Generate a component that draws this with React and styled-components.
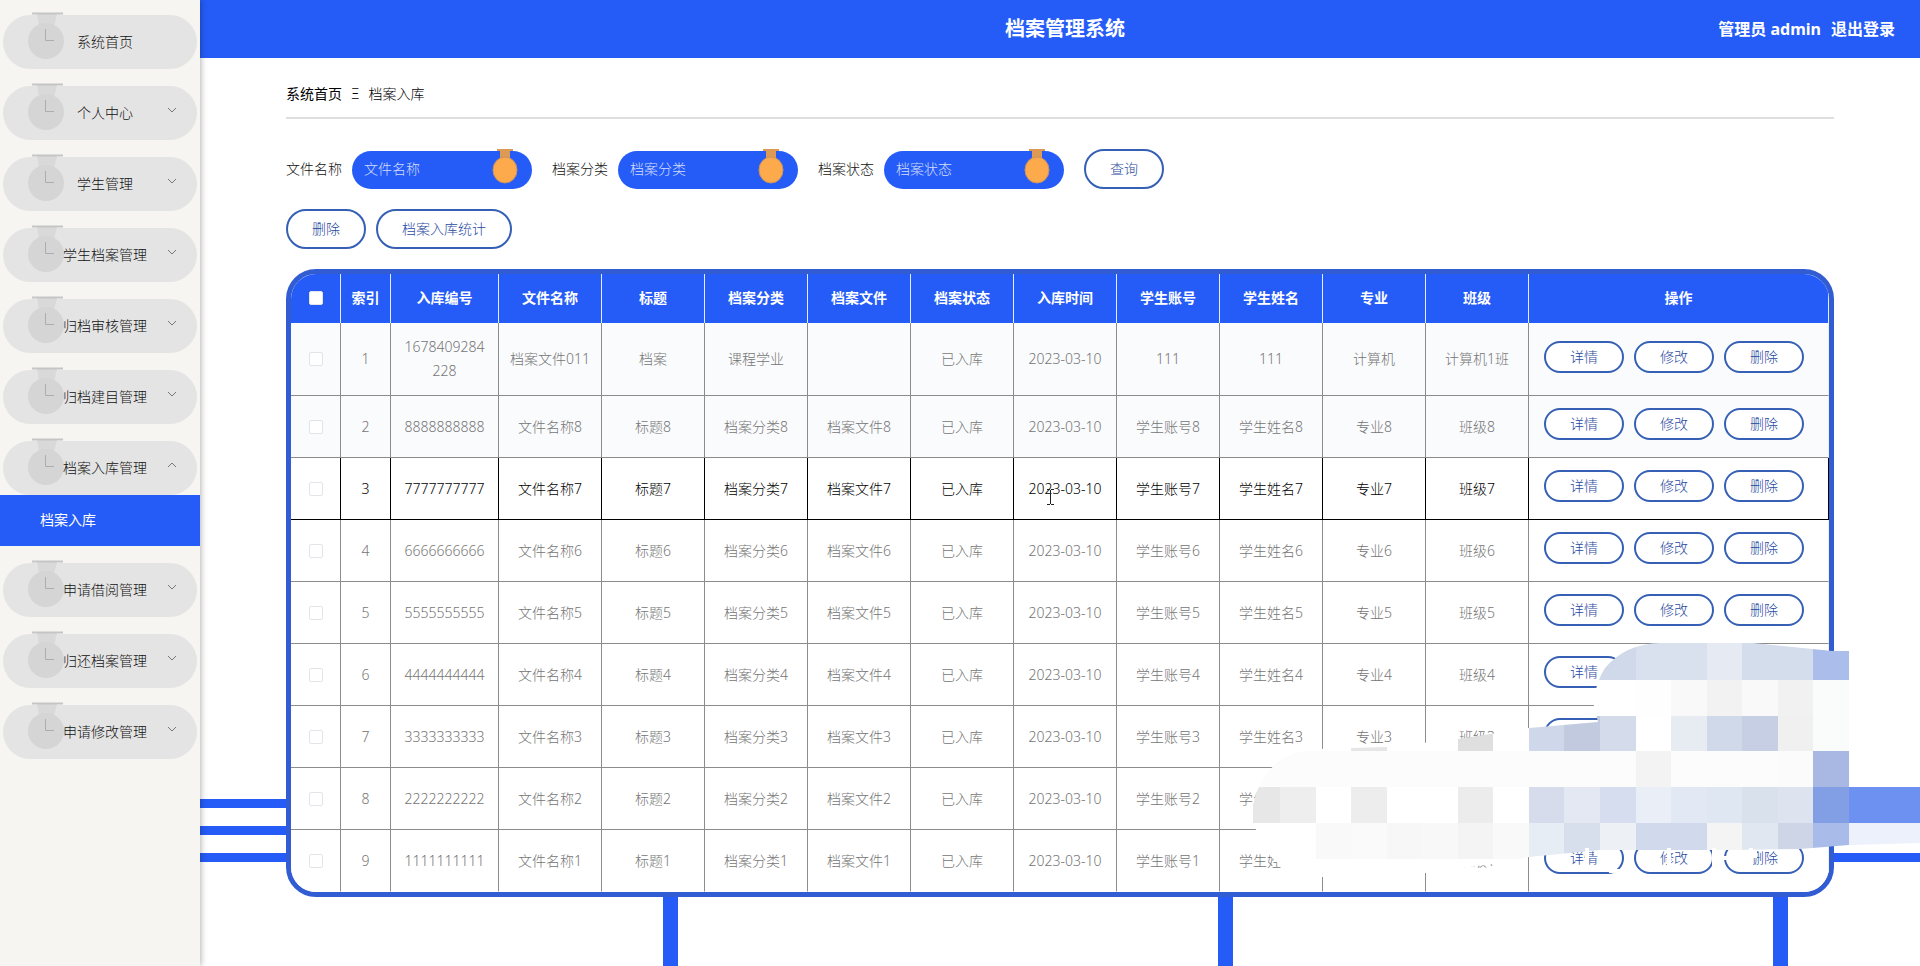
import React from 'react';
import styled, { createGlobalStyle, css } from 'styled-components';

const blue = '#255cf7';
const outline = '#3560b5';

const GlobalStyle = createGlobalStyle`
  * {
    box-sizing: border-box;
  }
  body {
    margin: 0;
    background: #fff;
    color: #111;
    font: 300 14px/24px 'Noto Sans', 'Noto Sans CJK SC', sans-serif;
  }
  button,
  input {
    font: inherit;
  }
  a {
    color: inherit;
    text-decoration: none;
  }
`;

const Page = styled.div`
  position: relative;
  display: flex;
  min-height: 100vh;
  overflow: hidden;
`;

const Sidebar = styled.nav`
  z-index: 1;
  flex: 0 0 200px;
  background: #f6f5f1;
  box-shadow: 1px 0 6px rgba(0, 0, 0, 0.3);
`;

const Menu = styled.ul`
  margin: 0;
  padding: 0;
  list-style: none;
`;

const MenuItem = styled.li`
  padding-top: 15px;
  & + & {
    padding-top: 17px;
  }
`;

const MenuButton = styled.button`
  position: relative;
  display: block;
  width: calc(100% - 6px);
  height: 54px;
  margin: 0 3px;
  padding: 0 0 0 10px;
  border: 0;
  border-radius: 27px;
  background: #e4e4e4;
  color: #111;
  text-align: center;
  cursor: pointer;
`;

const MenuLabel = styled.span`
  position: relative;
`;

const MenuMedal = styled.svg`
  position: absolute;
  left: 25px;
  top: -3px;
`;

const Chevron = styled.svg`
  position: absolute;
  right: 20px;
  top: 20px;
  transform: ${props => (props.$open ? 'rotate(180deg)' : 'none')};
`;

const SubLink = styled.a`
  display: block;
  padding: 0 0 1px 40px;
  background: ${blue};
  color: #fff;
  font-weight: 400;
  line-height: 50px;
`;

const Main = styled.div`
  display: flex;
  flex: 1;
  flex-direction: column;
  min-width: 0;
`;

const Header = styled.header`
  display: grid;
  grid-template-columns: 1fr auto 1fr;
  align-items: center;
  height: 58px;
  padding: 0 25px 0 35px;
  background: ${blue};
  color: #fff;
  font-size: 16px;
  font-weight: 700;
`;

const Title = styled.h1`
  grid-column: 2;
  margin: 0;
  font-size: 20px;
`;

const Account = styled.div`
  display: flex;
  justify-content: flex-end;
  gap: 10px;
`;

const Content = styled.main`
  flex: 1;
  padding: 24px 86px 68px;
  background:
    linear-gradient(${blue}, ${blue}) 0 calc(100% - 158px) / 100% 9px no-repeat,
    linear-gradient(${blue}, ${blue}) 0 calc(100% - 131px) / 100% 9px no-repeat,
    linear-gradient(${blue}, ${blue}) 0 calc(100% - 104px) / 100% 9px no-repeat,
    linear-gradient(90deg, ${blue} 15px, transparent 15px) 463px 100% / 555px 90px repeat-x;
`;

const Breadcrumb = styled.div`
  display: flex;
  gap: 9px;
  padding-bottom: 11px;
  border-bottom: 2px solid #dedede;
  color: #000;
`;

const SearchForm = styled.form`
  display: flex;
  align-items: center;
  gap: 20px;
  padding: 30px 0 20px;
`;

const Field = styled.div`
  display: flex;
  align-items: center;
  gap: 10px;
`;

const InputWrap = styled.div`
  position: relative;
  padding-top: 2px;
`;

const Input = styled.input`
  display: block;
  width: 180px;
  height: 38px;
  padding: 0 50px 3px 12px;
  border: 0;
  border-radius: 19px;
  background: ${blue};
  color: #fff;
  &::placeholder {
    color: #d3defd;
    opacity: 1;
  }
`;

const FieldMedal = styled.svg`
  position: absolute;
  right: 14px;
  top: 0;
`;

const Button = styled.button`
  min-width: 80px;
  height: ${props => (props.$small ? 32 : 40)}px;
  padding: 0 24px;
  border: 2px solid ${outline};
  border-radius: 20px;
  background: #fff;
  color: #1f49a0;
  line-height: 20px;
  cursor: pointer;
`;

const Toolbar = styled.div`
  display: flex;
  gap: 10px;
  padding-bottom: 20px;
`;

const Card = styled.div`
  overflow: hidden;
  border: 5px solid #315cd2;
  border-radius: 30px;
  background: #fff;
`;

const Table = styled.table`
  width: 100%;
  border-collapse: separate;
  border-spacing: 0;
  table-layout: fixed;
`;

const Th = styled.th`
  width: ${props => (props.$width ? `${props.$width}px` : 'auto')};
  height: 49px;
  padding: 0 0 2px;
  border-right: 1px solid #e4ecff;
  background: ${blue};
  color: #fff;
  font-weight: 700;
`;

const Td = styled.td`
  padding: 12px 11px;
  border: solid #8c8c8c;
  border-width: 0 1px 1px 0;
  text-align: center;
  word-break: break-all;
  &:last-child {
    border-right-color: #eee;
  }
`;

const TextTd = styled(Td)`
  padding: 12px 0;
`;

const ActionTd = styled(Td)`
  padding: 12px 15px 17px;
`;

const Actions = styled.div`
  display: flex;
  gap: 10px;
`;

const Tr = styled.tr`
  background: ${props => (props.$shaded ? '#fafbfd' : '#fff')};
  color: #757575;
  &:last-child td {
    border-bottom-color: transparent;
  }
  ${props => props.$active && css`
    color: #000;
    td,
    td:last-child {
      border-color: #000;
    }
  `}
`;

const Checkbox = styled.input`
  display: block;
  width: 14px;
  height: 14px;
  margin: 0 auto;
  border: 1px solid #e2e4e9;
  border-radius: 2px;
  background: #fff;
  appearance: none;
`;

const Mosaic = styled.svg`
  position: absolute;
  right: 0;
  top: 640px;
  pointer-events: none;
`;

const TextCursor = styled.svg`
  position: absolute;
  left: 1046px;
  top: 489px;
  pointer-events: none;
`;

const menus = [
  '系统首页',
  '个人中心',
  '学生管理',
  '学生档案管理',
  '归档审核管理',
  '归档建目管理',
  '档案入库管理',
  '申请借阅管理',
  '归还档案管理',
  '申请修改管理',
];

const fields = ['文件名称', '档案分类', '档案状态'];

const columns = [
  '入库编号',
  '文件名称',
  '标题',
  '档案分类',
  '档案文件',
  '档案状态',
  '入库时间',
  '学生账号',
  '学生姓名',
  '专业',
  '班级',
];

const rows = [
  ['1678409284228', '档案文件011', '档案', '课程学业', '', '已入库', '2023-03-10', '111', '111', '计算机', '计算机1班'],
  ...[8, 7, 6, 5, 4, 3, 2, 1].map(n => [
    String(n).repeat(10),
    `文件名称${n}`,
    `标题${n}`,
    `档案分类${n}`,
    `档案文件${n}`,
    '已入库',
    '2023-03-10',
    `学生账号${n}`,
    `学生姓名${n}`,
    `专业${n}`,
    `班级${n}`,
  ]),
];

// column edges and row edges of the mosaic, then one colour per block
const mosaicX = [0, 27, 63, 98, 134, 169, 205, 240, 276, 311, 347, 383, 418, 454, 489, 525, 560, 596, 667];
const mosaicY = [0, 40, 76, 111, 147, 183, 219, 240];
const mosaic = [
  'fff fff fff fff fff fff fff fff fff d0d9ea d0d9ea dae1ee dae1ee e6eaf2 d3ddec d3ddec abbdea fff',
  'fff fff fff fff fff fff fff fff fff fff fff fefefe f9f9f9 f3f2f2 f9f9f9 f1f1f1 fafbfb fff',
  'fff fff fff e6e6e6 fff fff dfdfdf fff cfd8ea c2cadf d4dceb fff e7ebf2 d0d9ea c7cfe4 f1f0f1 fafbfb fff',
  'fcfcfc fcfcfc fcfcfc fcfcfc fcfcfc fcfcfc fcfcfc fcfcfc fcfcfc fbfcfb fbfcfb f3f3f3 fcfcfc fcfcfc fcfcfc fbfbfb a8b8e3 fff',
  'e7e7e7 eee fff ededed fff fff ececec fff d6dcec e3e8f3 d5ddee eaeef7 e3e9f4 dfe8f2 d9e1ed dde4ef 829fe6 6d91f0',
  'fff fff f9f9f9 fafafa f7f7f7 f8f8f8 f4f4f4 f9f9f9 e6edf4 d7dfed edf1f6 d0daec d0daec f5f4f5 e0e7f1 ced5e6 a9bce9 ecf1fb',
  'fff fff fff fff fff fff fff fff e6edf4 d7dfed fff fff fff fff fff fff fff fff',
].map(line => line.split(' '));

function CensorBlock() {
  return (
    <Mosaic width="667" height="240" aria-hidden="true" shapeRendering="crispEdges">
      <clipPath id="smear">
        <path d="M0 183V165Q6 135 28 120Q44 110 63 109L134 107L205 99L276 88L345 82L340 62Q344 40 352 28Q372 4 407 3H500L579 11H596V140H667V203L596 205L547 209L476 210H347L276 217L240 224L172 233L69 237L29 228L12 210Z" />
      </clipPath>
      <g clipPath="url(#smear)">
        {mosaic.map((line, y) => line.map((color, x) => (
          <rect
            key={`${x}-${y}`}
            x={mosaicX[x]}
            y={mosaicY[y]}
            width={mosaicX[x + 1] - mosaicX[x]}
            height={mosaicY[y + 1] - mosaicY[y]}
            fill={`#${color}`}
          />
        )))}
      </g>
      <path
        d="M334 208V231M341 214H356M358 210V231H374V212M416 208V231M461 208V231M468 218H494M498 208V231M502 211V218"
        fill="none"
        stroke="#fff"
        strokeWidth="4"
      />
    </Mosaic>
  );
}

function MenuIcon() {
  return (
    <MenuMedal width="38" height="50" viewBox="0 0 38 50" aria-hidden="true">
      <path d="M9 2H29L26 14H11Z" fill="#d9d9d9" />
      <circle cx="18" cy="29" r="18" fill="#d5d5d5" />
      <path d="M4 1.5H35" stroke="#c5c5c5" strokeWidth="2" />
      <path d="M17.5 17V28.5H26" fill="none" stroke="#adadad" />
    </MenuMedal>
  );
}

function SearchField({ label }) {
  return (
    <Field>
      <label htmlFor={label}>{label}</label>
      <InputWrap>
        <Input id={label} type="text" placeholder={label} />
        <FieldMedal width="26" height="36" viewBox="0 0 26 36" aria-hidden="true">
          <path d="M5 0H21V2H18V10H8V2H5Z" fill="#dc9a55" />
          <ellipse cx="13" cy="21" rx="12" ry="13" fill="#fdaa4c" stroke="#c8925f" />
        </FieldMedal>
      </InputWrap>
    </Field>
  );
}

export default function App() {
  return (
    <Page>
      <GlobalStyle />
      <Sidebar>
        <Menu>
          {menus.map((name, i) => {
            const open = name === '档案入库管理';
            return (
              <MenuItem key={name}>
                <MenuButton type="button">
                  <MenuIcon />
                  <MenuLabel>{name}</MenuLabel>
                  {i > 0 && (
                    <Chevron $open={open} width="10" height="8" viewBox="0 0 10 8" aria-hidden="true">
                      <path d="M1 2L5 6L9 2" fill="none" stroke="#777" />
                    </Chevron>
                  )}
                </MenuButton>
                {open && <SubLink href="#storage">档案入库</SubLink>}
              </MenuItem>
            );
          })}
        </Menu>
      </Sidebar>
      <Main>
        <Header>
          <Title>档案管理系统</Title>
          <Account>
            <span>管理员 admin</span>
            <a href="#logout">退出登录</a>
          </Account>
        </Header>
        <Content>
          <Breadcrumb>
            <a href="#home"><b>系统首页</b></a>
            <span>Ξ</span>
            <span>档案入库</span>
          </Breadcrumb>
          <SearchForm>
            {fields.map(label => <SearchField key={label} label={label} />)}
            <Button type="button">查询</Button>
          </SearchForm>
          <Toolbar>
            <Button type="button">删除</Button>
            <Button type="button">档案入库统计</Button>
          </Toolbar>
          <Card>
            <Table>
              <thead>
                <tr>
                  <Th $width={50}><Checkbox type="checkbox" aria-label="全选" /></Th>
                  <Th $width={50}>索引</Th>
                  {columns.map((name, i) => (
                    <Th key={name} $width={i === 0 ? 108 : 0}>{name}</Th>
                  ))}
                  <Th $width={300}>操作</Th>
                </tr>
              </thead>
              <tbody>
                {rows.map(([id, ...cells], i) => (
                  <Tr key={id} $shaded={i < 2} $active={i === 2}>
                    <Td><Checkbox type="checkbox" aria-label={`选择 ${i + 1}`} /></Td>
                    <Td>{i + 1}</Td>
                    <Td>{id}</Td>
                    {cells.map((cell, j) => <TextTd key={columns[j + 1]}>{cell}</TextTd>)}
                    <ActionTd>
                      <Actions>
                        <Button type="button" $small>详情</Button>
                        <Button type="button" $small>修改</Button>
                        <Button type="button" $small>删除</Button>
                      </Actions>
                    </ActionTd>
                  </Tr>
                ))}
              </tbody>
            </Table>
          </Card>
        </Content>
      </Main>
      <CensorBlock />
      <TextCursor width="9" height="16" viewBox="0 0 9 16" aria-hidden="true">
        <path d="M1 0.5H4M5 0.5H8M4.5 1V15M1 15.5H4M5 15.5H8" fill="none" stroke="#222" />
      </TextCursor>
    </Page>
  );
}
